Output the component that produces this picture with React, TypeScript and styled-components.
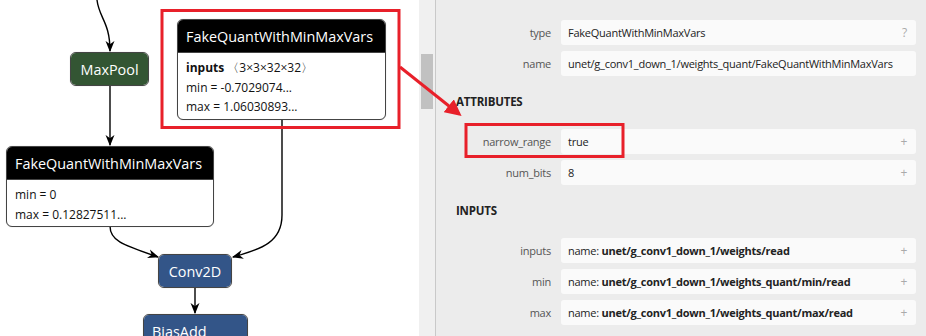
import React from 'react';
import styled, { createGlobalStyle } from 'styled-components';

const GlobalStyle = createGlobalStyle`
  html, body {
    margin: 0;
    padding: 0;
    background: #ffffff;
  }
  body {
    font-family: 'Open Sans', 'Noto Sans', sans-serif;
  }
`;

interface NodeBox {
  x: number;
  y: number;
  width: number;
}

interface HeaderType {
  fill: string;
  align?: 'left' | 'center';
}

interface SidebarRow {
  label: string;
  value: string;
  prefix?: string;
  action: string;
}

const attributes: SidebarRow[] = [
  { label: 'narrow_range', value: 'true', action: '+' },
  { label: 'num_bits', value: '8', action: '+' },
];

const inputs: SidebarRow[] = [
  { label: 'inputs', prefix: 'name: ', value: 'unet/g_conv1_down_1/weights/read', action: '+' },
  { label: 'min', prefix: 'name: ', value: 'unet/g_conv1_down_1/weights_quant/min/read', action: '+' },
  { label: 'max', prefix: 'name: ', value: 'unet/g_conv1_down_1/weights_quant/max/read', action: '+' },
];

const App = () => {
  return (
    <>
      <GlobalStyle />
      <Page>
        <GraphCanvas>
          <Edges width="419" height="336">
            <defs>
              <marker id="arrow" viewBox="0 0 10 10" refX="9" refY="5" markerWidth="8" markerHeight="8" orient="auto">
                <path d="M0,1 L10,5 L0,9 L3,5 z" />
              </marker>
            </defs>
            <path d="M97 0 C 99 18, 110 22, 110 51" markerEnd="url(#arrow)" />
            <path d="M110 85 L110 145" markerEnd="url(#arrow)" />
            <path d="M110 226 C 110 240, 120 244, 158 257" markerEnd="url(#arrow)" />
            <path d="M282 118 L282 215 C 282 242, 262 249, 233 257" markerEnd="url(#arrow)" />
            <path d="M195 287 L195 313" markerEnd="url(#arrow)" />
          </Edges>

          <SimpleNode x={70} y={52} width={79} fill="#335533">MaxPool</SimpleNode>

          <DetailNode x={177} y={19} width={209}>
            <NodeHeader fill="#000000" align="left">FakeQuantWithMinMaxVars</NodeHeader>
            <NodeBody>
              <AttrLine>
                <b>inputs</b> 〈3×3×32×32〉
              </AttrLine>
              <AttrLine>min = -0.7029074...</AttrLine>
              <AttrLine>max = 1.06030893...</AttrLine>
            </NodeBody>
          </DetailNode>

          <DetailNode x={6} y={146} width={208}>
            <NodeHeader fill="#000000" align="left">FakeQuantWithMinMaxVars</NodeHeader>
            <NodeBody>
              <AttrLine>min = 0</AttrLine>
              <AttrLine>max = 0.12827511...</AttrLine>
            </NodeBody>
          </DetailNode>

          <SimpleNode x={158} y={254} width={74} fill="#335588">Conv2D</SimpleNode>
          <SimpleNode x={143} y={314} width={105} fill="#335588" align="left">BiasAdd</SimpleNode>
        </GraphCanvas>

        <Scrollbar>
          <Thumb />
        </Scrollbar>

        <Sidebar>
          <RowList>
            <PropertyRow>
              <RowLabel>type</RowLabel>
              <RowValue>
                <ValueText>FakeQuantWithMinMaxVars</ValueText>
                <RowAction>?</RowAction>
              </RowValue>
            </PropertyRow>
            <PropertyRow>
              <RowLabel>name</RowLabel>
              <RowValue>
                <ValueText>unet/g_conv1_down_1/weights_quant/FakeQuantWithMinMaxVars</ValueText>
              </RowValue>
            </PropertyRow>
          </RowList>

          <SectionTitle>ATTRIBUTES</SectionTitle>
          <RowList>
            {attributes.map((row) => (
              <PropertyRow key={row.label}>
                <RowLabel>{row.label}</RowLabel>
                <RowValue>
                  <ValueText>{row.value}</ValueText>
                  <RowAction>{row.action}</RowAction>
                </RowValue>
              </PropertyRow>
            ))}
          </RowList>

          <SectionTitle>INPUTS</SectionTitle>
          <RowList>
            {inputs.map((row) => (
              <PropertyRow key={row.label}>
                <RowLabel>{row.label}</RowLabel>
                <RowValue>
                  <ValueText>
                    {row.prefix}
                    <strong>{row.value}</strong>
                  </ValueText>
                  <RowAction>{row.action}</RowAction>
                </RowValue>
              </PropertyRow>
            ))}
          </RowList>
        </Sidebar>

        <Annotations width="926" height="336">
          <defs>
            <marker id="redhead" viewBox="0 0 10 10" refX="8" refY="5" markerWidth="5.5" markerHeight="5.5" orient="auto">
              <path d="M0,0 L10,5 L0,10 z" />
            </marker>
          </defs>
          <rect x="162" y="10.5" width="237" height="117" />
          <rect x="466" y="124.5" width="157" height="32" />
          <line x1="400" y1="67" x2="459" y2="114" markerEnd="url(#redhead)" />
        </Annotations>
      </Page>
    </>
  );
};

const SimpleNode = ({
  x,
  y,
  width,
  fill,
  align,
  children,
}: NodeBox & HeaderType & { children: React.ReactNode }) => {
  return (
    <NodeFrame style={{ left: x, top: y, width }}>
      <NodeHeader fill={fill} align={align}>
        {children}
      </NodeHeader>
    </NodeFrame>
  );
};

const DetailNode = ({ x, y, width, children }: NodeBox & { children: React.ReactNode }) => {
  return <NodeFrame style={{ left: x, top: y, width }}>{children}</NodeFrame>;
};

export default App;

const Page = styled.div`
  position: relative;
  display: flex;
  width: 926px;
  height: 336px;
  overflow: hidden;
`;

const GraphCanvas = styled.div`
  position: relative;
  width: 419px;
  height: 100%;
  flex-shrink: 0;
  background: #ffffff;
`;

const Edges = styled.svg`
  position: absolute;
  left: 0;
  top: 0;

  path {
    fill: none;
    stroke: #000;
    stroke-width: 1.4px;
  }

  marker path {
    stroke: none;
    fill: #000;
  }
`;

const NodeFrame = styled.div`
  position: absolute;
  box-sizing: border-box;
  border: 1px solid #444;
  border-radius: 6px;
  overflow: hidden;
  background: #ffffff;
  box-shadow: 0 0 1px rgba(0, 0, 0, 0.3);
`;

const NodeHeader = styled.div<HeaderType>`
  height: 32px;
  display: flex;
  align-items: center;
  justify-content: ${({ align }) => (align === 'left' ? 'flex-start' : 'center')};
  padding: 0 ${({ align }) => (align === 'left' ? '8px' : '0')};
  background: ${({ fill }) => fill};
  color: #ffffff;
  font-family: 'Open Sans', sans-serif;
  font-size: 14.4px;
  white-space: nowrap;

  &:not(:last-child) {
    border-bottom: 1px solid #444;
  }
`;

const NodeBody = styled.div`
  padding: 5px 8px 2px;
`;

const AttrLine = styled.div`
  height: 19.5px;
  line-height: 19.5px;
  font-family: 'Open Sans', sans-serif;
  font-size: 12px;
  color: #111;
  white-space: nowrap;

  b {
    font-weight: 700;
  }
`;

const Scrollbar = styled.div`
  width: 17px;
  height: 100%;
  flex-shrink: 0;
  box-sizing: border-box;
  padding: 54px 2px 0 2px;
  background: #f0f0f0;
  border-right: 1px solid #c9c9c9;
`;

const Thumb = styled.div`
  height: 55px;
  background: #c1c1c1;
`;

const Sidebar = styled.div`
  flex: 1;
  height: 100%;
  box-sizing: border-box;
  padding: 20px 10px 0 20px;
  background: #ececec;
  font-family: 'Open Sans', sans-serif;
  font-size: 11px;
  letter-spacing: -0.25px;
`;

const RowList = styled.div`
  display: flex;
  flex-direction: column;
  gap: 6px;
`;

const PropertyRow = styled.div`
  display: grid;
  grid-template-columns: 95px 1fr;
  column-gap: 10px;
  height: 25px;
`;

const RowLabel = styled.div`
  display: flex;
  align-items: center;
  justify-content: flex-end;
  color: #555;
  white-space: nowrap;
`;

const RowValue = styled.div`
  display: flex;
  align-items: center;
  justify-content: space-between;
  padding: 0 9px 0 7px;
  background: #fafafa;
  border-radius: 3px;
`;

const ValueText = styled.span`
  color: #222;
  white-space: nowrap;

  strong {
    font-weight: 700;
  }
`;

const RowAction = styled.span`
  color: #aaa;
  font-size: 12px;
`;

const SectionTitle = styled.div`
  margin: 18px 0 19px;
  height: 16px;
  line-height: 16px;
  font-weight: 700;
  font-size: 11.5px;
  letter-spacing: -0.2px;
  color: #222;
`;

const Annotations = styled.svg`
  position: absolute;
  left: 0;
  top: 0;
  pointer-events: none;

  rect {
    fill: none;
    stroke: #e8202a;
    stroke-width: 3px;
  }

  line {
    stroke: #e8202a;
    stroke-width: 3px;
  }

  marker path {
    stroke: none;
    fill: #e8202a;
  }
`;
